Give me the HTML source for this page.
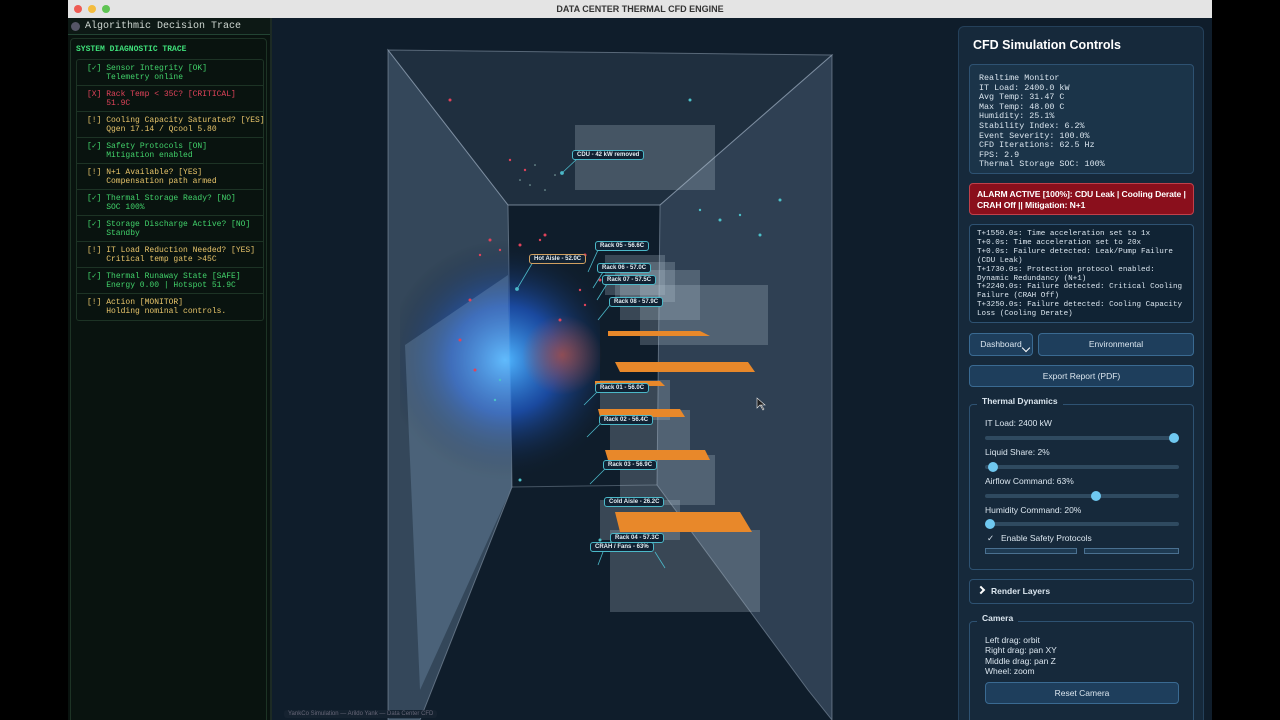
<!DOCTYPE html>
<html><head><meta charset="utf-8"><style>
*{box-sizing:border-box;margin:0;padding:0}
body{width:1280px;height:720px;background:#000;overflow:hidden;position:relative;font-family:"Liberation Sans",sans-serif}
.win{position:absolute;left:68px;top:0;width:1144px;height:720px;background:#0f1d2b;overflow:hidden}
.tb{position:absolute;left:0;top:0;width:1144px;height:18px;background:#e4e4e4;text-align:center;font:bold 9px "Liberation Sans",sans-serif;line-height:18px;color:#333}
.dot{position:absolute;top:5px;width:8px;height:8px;border-radius:50%}
.lp{position:absolute;left:0;top:18px;width:204px;height:702px;background:#09130f;border-right:2px solid #1c2a24;font-family:"Liberation Mono",monospace}
.lph{height:17px;background:#0d1915;color:#cfd8d2;font-size:10px;line-height:17px;padding-left:17px;border-bottom:1px solid #243}
.lpb{position:absolute;left:2px;top:20px;width:197px;height:690px;border:1px solid #1d3325;border-radius:4px}
.lpt{color:#3fe07a;font-weight:bold;font-size:8px;padding:6px 0 0 5px;height:20px}
.items{position:absolute;left:5px;top:20px;width:188px;border:1px solid #1d3325;border-radius:3px}
.it{height:26px;border-bottom:1px solid #1d3325;font-size:8px;line-height:9px;padding:4px 0 0 10px;white-space:pre}
.g{color:#42d36b}.r{color:#e0435a}.y{color:#e7c46a}
.rp{position:absolute;left:890px;top:26px;width:246px;height:700px;background:#16293b;border:1px solid #24405a;border-radius:6px;color:#dbe6ef}
.mono{font-family:"Liberation Mono",monospace}
.box{position:absolute;border:1px solid #2e5272;border-radius:4px}
.btn{position:absolute;background:#1e3e5c;border:1px solid #3a6a92;border-radius:4px;font-size:8.5px;text-align:center;color:#dbe6ef}
.sl{position:absolute;left:26px;width:194px;height:4px;background:#2f4a60;border-radius:2px}
.kn{position:absolute;width:10px;height:10px;border-radius:50%;background:#6fc8f0;top:-3px}
.lab{position:absolute;font-size:8.5px;color:#dbe6ef}
.tag{position:absolute;background:#112233;border:1px solid #4bb8c8;border-radius:3px;color:#e5eef3;font-size:6px;padding:1px 4px;white-space:nowrap;font-weight:bold}
</style></head><body>
<div class="win">
<svg style="position:absolute;left:-68px;top:0" width="1280" height="720">
<defs>
<radialGradient id="bl" cx="505" cy="360" r="120" gradientUnits="userSpaceOnUse"><stop offset="0" stop-color="#4fb6ff"/><stop offset=".45" stop-color="#1f5cd0" stop-opacity=".7"/><stop offset="1" stop-color="#0f1d2b" stop-opacity="0"/></radialGradient>
<radialGradient id="rd" cx="562" cy="355" r="40" gradientUnits="userSpaceOnUse"><stop offset="0" stop-color="#c0503a" stop-opacity=".7"/><stop offset="1" stop-color="#c0503a" stop-opacity="0"/></radialGradient>
</defs>
<rect x="272" y="18" width="686" height="702" fill="#0f1d2b"/>
<polygon points="388,50 832,55 660,205 508,205" fill="#8aa4c0" fill-opacity=".14" stroke="#9ab" stroke-opacity=".5"/>
<polygon points="388,50 508,205 512,487 420,720 388,720" fill="#8aa8c8" fill-opacity=".3" stroke="#9ab" stroke-opacity=".5"/>
<polygon points="832,55 660,205 657,485 808,690 832,720" fill="#8aa8c8" fill-opacity=".26" stroke="#9ab" stroke-opacity=".5"/>
<rect x="400" y="220" width="200" height="300" fill="url(#bl)"/>
<polygon points="405,345 508,275 512,487 420,690" fill="#a8d0f4" fill-opacity=".2"/>
<circle cx="562" cy="355" r="40" fill="url(#rd)"/>
<line x1="508" y1="205" x2="660" y2="205" stroke="#9ab" stroke-opacity=".4"/>
<line x1="512" y1="487" x2="657" y2="485" stroke="#9ab" stroke-opacity=".4"/>
<g fill="#b8c6d4" fill-opacity=".25">
<rect x="575" y="125" width="140" height="65"/>
<rect x="605" y="255" width="60" height="40"/><rect x="615" y="262" width="60" height="40"/>
<rect x="620" y="270" width="80" height="50"/><rect x="640" y="285" width="128" height="60"/>
<rect x="600" y="380" width="70" height="40"/><rect x="610" y="410" width="80" height="40"/>
<rect x="620" y="455" width="95" height="50"/><rect x="600" y="500" width="80" height="40"/>
<rect x="610" y="530" width="150" height="82"/>
</g>
<g fill="#e8882a">
<polygon points="608,331 700,331 710,336 608,336"/>
<polygon points="615,362 748,362 755,372 620,372"/>
<polygon points="595,381 660,381 665,386 595,386"/>
<polygon points="598,409 680,409 685,417 600,417"/>
<polygon points="605,450 705,450 710,460 608,460"/>
<polygon points="615,512 740,512 752,532 620,532"/>
</g>
<g fill="#e0435a"><circle cx="450" cy="100" r="1.5"/><circle cx="470" cy="300" r="1.5"/><circle cx="460" cy="340" r="1.5"/><circle cx="475" cy="370" r="1.5"/><circle cx="560" cy="320" r="1.5"/><circle cx="600" cy="280" r="1.5"/><circle cx="520" cy="245" r="1.5"/><circle cx="545" cy="235" r="1.5"/><circle cx="490" cy="240" r="1.5"/><circle cx="585" cy="255" r="1.5"/><circle cx="510" cy="160" r="1.2"/><circle cx="525" cy="170" r="1.2"/><circle cx="540" cy="240" r="1.2"/><circle cx="500" cy="250" r="1.2"/><circle cx="480" cy="255" r="1.2"/><circle cx="580" cy="290" r="1.2"/><circle cx="585" cy="305" r="1.2"/></g>
<g fill="#cfe" fill-opacity=".6"><circle cx="520" cy="180" r=".8"/><circle cx="530" cy="185" r=".8"/><circle cx="545" cy="190" r=".8"/><circle cx="555" cy="175" r=".8"/><circle cx="535" cy="165" r=".8"/></g>
<g fill="#4cc0c8"><circle cx="720" cy="220" r="1.5"/><circle cx="760" cy="235" r="1.5"/><circle cx="780" cy="200" r="1.5"/><circle cx="690" cy="100" r="1.5"/><circle cx="600" cy="540" r="1.5"/><circle cx="520" cy="480" r="1.5"/><circle cx="740" cy="215" r="1.2"/><circle cx="700" cy="210" r="1.2"/><circle cx="500" cy="380" r="1.2"/><circle cx="495" cy="400" r="1.2"/></g>
<g stroke="#4bb8c8" stroke-width=".8" fill="#4bb8c8">
<line x1="562" y1="173" x2="578" y2="158"/><circle cx="562" cy="173" r="1.5"/>
<line x1="517" y1="289" x2="533" y2="262"/><circle cx="517" cy="289" r="1.5"/>
<line x1="588" y1="272" x2="598" y2="250"/><line x1="593" y1="288" x2="603" y2="272"/><line x1="597" y1="300" x2="607" y2="284"/><line x1="598" y1="320" x2="610" y2="305"/>
<line x1="584" y1="405" x2="597" y2="392"/><line x1="587" y1="437" x2="600" y2="424"/><line x1="590" y1="484" x2="605" y2="469"/>
<line x1="598" y1="565" x2="603" y2="552"/><line x1="665" y1="568" x2="655" y2="552"/>
</g>
<path d="M757,398 l0,10 l3,-3 l3,5 l1,-1 l-3,-4 l4,0 z" fill="#222" stroke="#eee" stroke-width=".6"/>
</svg>
<div class="tb">DATA CENTER THERMAL CFD ENGINE
<span class="dot" style="left:6px;background:#ee5b53"></span><span class="dot" style="left:20px;background:#f4bd3f"></span><span class="dot" style="left:34px;background:#5fc453"></span></div>
<div class="lp">
<div class="lph">Algorithmic Decision Trace</div>
<span style="position:absolute;left:3px;top:4px;width:9px;height:9px;border-radius:50%;background:#556"></span>
<div class="lpb"><div class="lpt">SYSTEM DIAGNOSTIC TRACE</div>
<div class="items">
<div class="it g">[✓] Sensor Integrity [OK]
    Telemetry online</div>
<div class="it r">[X] Rack Temp < 35C? [CRITICAL]
    51.9C</div>
<div class="it y">[!] Cooling Capacity Saturated? [YES]
    Qgen 17.14 / Qcool 5.80</div>
<div class="it g">[✓] Safety Protocols [ON]
    Mitigation enabled</div>
<div class="it y">[!] N+1 Available? [YES]
    Compensation path armed</div>
<div class="it g">[✓] Thermal Storage Ready? [NO]
    SOC 100%</div>
<div class="it g">[✓] Storage Discharge Active? [NO]
    Standby</div>
<div class="it y">[!] IT Load Reduction Needed? [YES]
    Critical temp gate >45C</div>
<div class="it g">[✓] Thermal Runaway State [SAFE]
    Energy 0.00 | Hotspot 51.9C</div>
<div class="it y" style="border:none">[!] Action [MONITOR]
    Holding nominal controls.</div>
</div></div></div>
<div class="tag" style="left:504px;top:150px">CDU - 42 kW removed</div>
<div class="tag" style="left:461px;top:254px;border-color:#d0a060">Hot Aisle - 52.0C</div>
<div class="tag" style="left:527px;top:241px">Rack 05 - 56.6C</div>
<div class="tag" style="left:529px;top:263px">Rack 06 - 57.0C</div>
<div class="tag" style="left:534px;top:275px">Rack 07 - 57.5C</div>
<div class="tag" style="left:541px;top:297px">Rack 08 - 57.9C</div>
<div class="tag" style="left:527px;top:383px">Rack 01 - 56.0C</div>
<div class="tag" style="left:531px;top:415px">Rack 02 - 56.4C</div>
<div class="tag" style="left:535px;top:460px">Rack 03 - 56.9C</div>
<div class="tag" style="left:536px;top:497px">Cold Aisle - 26.2C</div>
<div class="tag" style="left:542px;top:533px">Rack 04 - 57.3C</div>
<div class="tag" style="left:522px;top:542px">CRAH / Fans - 63%</div>
<div style="position:absolute;left:216px;top:710px;font-size:6px;color:#667;background:#152230;padding:1px 4px;border-radius:3px">YankCo Simulation — Arildo Yank — Data Center CFD</div>
<div class="rp">
<div style="position:absolute;left:14px;top:11px;font-size:12.5px;font-weight:bold;color:#fff">CFD Simulation Controls</div>
<div class="box mono" style="left:10px;top:37px;width:225px;height:110px;background:#1b3449;font-size:8.4px;line-height:9.6px;padding:9px 9px;white-space:pre">Realtime Monitor
IT Load: 2400.0 kW
Avg Temp: 31.47 C
Max Temp: 48.00 C
Humidity: 25.1%
Stability Index: 6.2%
Event Severity: 100.0%
CFD Iterations: 62.5 Hz
FPS: 2.9
Thermal Storage SOC: 100%</div>
<div class="box" style="left:10px;top:156px;width:225px;height:32px;background:#8a0f1c;border-color:#c0404a;font-size:8.6px;font-weight:bold;line-height:10.5px;padding:5px 7px;color:#fff;letter-spacing:-.1px">ALARM ACTIVE [100%]: CDU Leak | Cooling Derate | CRAH Off || Mitigation: N+1</div>
<div class="box mono" style="left:10px;top:197px;width:225px;height:99px;background:#102334;font-size:7.6px;line-height:8.9px;padding:5px 4px 5px 7px">T+1550.0s: Time acceleration set to 1x<br>T+0.0s: Time acceleration set to 20x<br>T+0.0s: Failure detected: Leak/Pump Failure (CDU Leak)<br>T+1730.0s: Protection protocol enabled: Dynamic Redundancy (N+1)<br>T+2240.0s: Failure detected: Critical Cooling Failure (CRAH Off)<br>T+3250.0s: Failure detected: Cooling Capacity Loss (Cooling Derate)</div>
<div class="btn" style="left:10px;top:306px;width:64px;height:23px;line-height:21px">Dashboard</div>
<div style="position:absolute;left:64px;top:318px;width:6px;height:6px;border-right:1.5px solid #fff;border-bottom:1.5px solid #fff;transform:rotate(45deg)"></div>
<div class="btn" style="left:79px;top:306px;width:156px;height:23px;line-height:21px">Environmental</div>
<div class="btn" style="left:10px;top:338px;width:225px;height:22px;line-height:20px">Export Report (PDF)</div>
<div class="box" style="left:10px;top:377px;width:225px;height:166px"></div>
<div style="position:absolute;left:18px;top:369px;font-size:8.5px;font-weight:bold;background:#16293b;padding:0 5px">Thermal Dynamics</div>
<div class="lab" style="left:26px;top:391px">IT Load: 2400 kW</div><div class="sl" style="top:409px"><div class="kn" style="left:184px"></div></div>
<div class="lab" style="left:26px;top:420px">Liquid Share: 2%</div><div class="sl" style="top:438px"><div class="kn" style="left:3px"></div></div>
<div class="lab" style="left:26px;top:449px">Airflow Command: 63%</div><div class="sl" style="top:467px"><div class="kn" style="left:106px"></div></div>
<div class="lab" style="left:26px;top:478px">Humidity Command: 20%</div><div class="sl" style="top:495px"><div class="kn" style="left:0"></div></div>
<div class="lab" style="left:28px;top:506px">✓</div><div class="lab" style="left:42px;top:506px">Enable Safety Protocols</div>
<div style="position:absolute;left:26px;top:521px;width:92px;height:6px;border:1px solid #4a7090;background:#1e3a52"></div>
<div style="position:absolute;left:125px;top:521px;width:95px;height:6px;border:1px solid #4a7090;background:#1e3a52"></div>
<div class="box" style="left:10px;top:552px;width:225px;height:25px;font-size:8.5px;font-weight:bold;line-height:23px;padding-left:21px">Render Layers</div>
<div style="position:absolute;left:19px;top:560px;width:6px;height:6px;border-right:2px solid #fff;border-top:2px solid #fff;transform:rotate(45deg)"></div>
<div class="box" style="left:10px;top:594px;width:225px;height:110px"></div>
<div style="position:absolute;left:18px;top:586px;font-size:8.5px;font-weight:bold;background:#16293b;padding:0 5px">Camera</div>
<div class="lab" style="left:26px;top:608px;line-height:10.3px">Left drag: orbit<br>Right drag: pan XY<br>Middle drag: pan Z<br>Wheel: zoom</div>
<div class="btn" style="left:26px;top:655px;width:194px;height:22px;line-height:20px">Reset Camera</div>
</div>
</div>
</body></html>
